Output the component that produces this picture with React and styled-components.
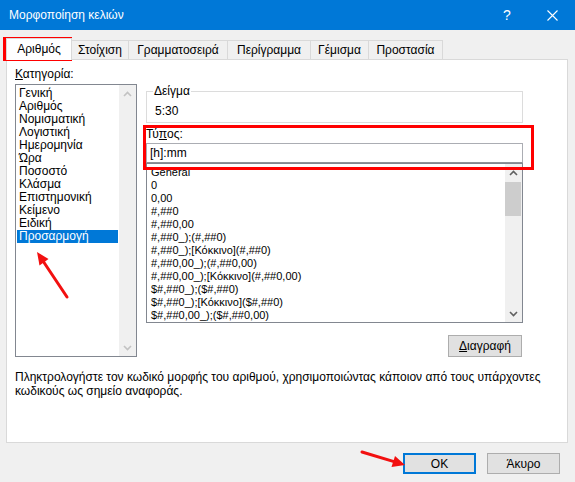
import React from 'react';
import styled, { createGlobalStyle } from 'styled-components';

const Global = createGlobalStyle`
  html, body { margin: 0; padding: 0; background: #f0f0f0; }
  body { font-family: "Liberation Sans", Arial, sans-serif; font-size: 12px; color: #000; }
  * { box-sizing: border-box; }
`;

const Window = styled.div`
  position: relative;
  width: 575px;
  height: 482px;
  background: #f0f0f0;
  display: flex;
  flex-direction: column;
  overflow: hidden;
`;

const TitleBar = styled.div`
  height: 30px;
  flex: none;
  background: #0078d7;
  color: #fff;
  display: flex;
  align-items: center;
  padding-left: 9px;
  font-size: 12px;
`;

const Title = styled.div`
  flex: 1;
`;

const TitleButton = styled.div`
  width: ${p => p.$w}px;
  height: 30px;
  display: flex;
  align-items: center;
  justify-content: center;
  font-size: 14px;
`;

const Body = styled.div`
  padding: 8px 7px 0 6px;
  display: flex;
  flex-direction: column;
`;

const TabStrip = styled.div`
  height: 21px;
  display: flex;
  align-items: flex-end;
  position: relative;
  z-index: 2;
`;

const Tab = styled.div`
  width: ${p => p.$w}px;
  height: ${p => (p.$active ? 22 : 19)}px;
  margin-left: ${p => (p.$first ? 0 : -1)}px;
  margin-bottom: ${p => (p.$active ? -1 : 0)}px;
  background: ${p => (p.$active ? '#fff' : '#f0f0f0')};
  border: 1px solid #d9d9d9;
  border-bottom: none;
  display: flex;
  align-items: center;
  justify-content: center;
  padding-bottom: ${p => (p.$active ? 1 : 0)}px;
  font-size: 12px;
  position: relative;
  z-index: ${p => (p.$active ? 2 : 1)};
`;

const Panel = styled.div`
  height: 384px;
  background: #fff;
  border: 1px solid #d9d9d9;
  padding: 7px 0 0 8px;
  display: flex;
  flex-direction: column;
`;

const TopArea = styled.div`
  display: flex;
  gap: 9px;
`;

const LeftColumn = styled.div`
  width: 122px;
  display: flex;
  flex-direction: column;
`;

const FieldLabel = styled.div`
  height: ${p => p.$h || 17}px;
  line-height: 14px;
  margin-top: ${p => p.$mt || 0}px;
  font-size: 12px;
`;

const U = styled.span`
  text-decoration: underline;
`;

const ListBox = styled.div`
  height: ${p => p.$h}px;
  border: 1px solid #828790;
  background: #fff;
  display: flex;
  overflow: hidden;
`;

const Rows = styled.div`
  flex: 1;
  min-width: 0;
  padding-top: ${p => p.$pt}px;
  overflow: hidden;
`;

const CatItem = styled.div`
  height: 13px;
  line-height: 13px;
  margin: 0 1px;
  padding-left: 2px;
  font-size: 12px;
  white-space: nowrap;
  background: ${p => (p.$selected ? '#0078d7' : 'transparent')};
  color: ${p => (p.$selected ? '#fff' : '#000')};
`;

const FmtItem = styled.div`
  height: 13px;
  line-height: 13px;
  padding-left: 4px;
  font-size: 11px;
  white-space: nowrap;
`;

const ScrollBar = styled.div`
  width: 17px;
  flex: none;
  background: #f0f0f0;
  display: flex;
  flex-direction: column;
`;

const ScrollArrow = styled.div`
  height: 17px;
  flex: none;
  display: flex;
  align-items: center;
  justify-content: center;
`;

const ScrollTrack = styled.div`
  flex: 1;
  padding: 1px 1px 0 0;
`;

const Thumb = styled.div`
  height: 34px;
  background: #cdcdcd;
`;

const RightColumn = styled.div`
  width: 377px;
  padding-top: 17px;
  display: flex;
  flex-direction: column;
`;

const GroupBox = styled.fieldset`
  margin: 0;
  padding: 0 0 0 6px;
  border: 1px solid #dcdcdc;
  min-width: 0;
  height: 39px;
`;

const Legend = styled.legend`
  padding: 0 1px;
  font-size: 12px;
  line-height: 14px;
`;

const SampleValue = styled.div`
  padding: 6px 0 0 2px;
  line-height: 14px;
  font-size: 12px;
`;

const TextInput = styled.div`
  height: 20px;
  flex: none;
  border: 1px solid #abadb3;
  border-bottom-color: #8f9398;
  padding-left: 3px;
  line-height: 18px;
  font-size: 12px;
  background: #fff;
`;

const ButtonRow = styled.div`
  display: flex;
  justify-content: flex-end;
  margin-top: 12px;
  padding-right: 1px;
`;

const Button = styled.div`
  width: ${p => p.$w}px;
  height: ${p => p.$h}px;
  background: #e1e1e1;
  border: ${p => (p.$default ? '2px solid #0078d7' : '1px solid #adadad')};
  display: flex;
  align-items: center;
  justify-content: center;
  font-size: 12px;
`;

const Description = styled.div`
  margin-top: 13px;
  line-height: 14px;
  font-size: 12px;
  white-space: nowrap;
`;

const Footer = styled.div`
  display: flex;
  justify-content: flex-end;
  gap: 11px;
  padding: 10px 8px 0 0;
`;

const Overlay = styled.svg`
  position: absolute;
  left: 0;
  top: 0;
  pointer-events: none;
`;

const Chevron = ({ up, color }) => (
  <svg width="9" height="6" viewBox="0 0 9 6">
    <polyline
      points={up ? '1,5 4.5,1.5 8,5' : '1,1 4.5,4.5 8,1'}
      fill="none"
      stroke={color}
      strokeWidth="1.6"
    />
  </svg>
);

const categories = [
  'Γενική', 'Αριθμός', 'Νομισματική', 'Λογιστική', 'Ημερομηνία', 'Ώρα',
  'Ποσοστό', 'Κλάσμα', 'Επιστημονική', 'Κείμενο', 'Ειδική', 'Προσαρμογή',
];

const formats = [
  'General', '0', '0,00', '#,##0', '#,##0,00', '#,##0_);(#,##0)',
  '#,##0_);[Κόκκινο](#,##0)', '#,##0,00_);(#,##0,00)',
  '#,##0,00_);[Κόκκινο](#,##0,00)', '$#,##0_);($#,##0)',
  '$#,##0_);[Κόκκινο]($#,##0)', '$#,##0,00_);($#,##0,00)',
];

const tabs = [
  ['Αριθμός', 66], ['Στοίχιση', 58], ['Γραμματοσειρά', 100],
  ['Περίγραμμα', 84], ['Γέμισμα', 59], ['Προστασία', 75],
];

export default function App() {
  return (
    <>
      <Global />
      <Window>
        <TitleBar>
          <Title>Μορφοποίηση κελιών</Title>
          <TitleButton $w={44}>?</TitleButton>
          <TitleButton $w={46}>
            <svg width="11" height="11" viewBox="0 0 11 11">
              <path d="M0.5 0.5 L10.5 10.5 M10.5 0.5 L0.5 10.5" stroke="#fff" strokeWidth="1.1" />
            </svg>
          </TitleButton>
        </TitleBar>
        <Body>
          <TabStrip>
            {tabs.map(([t, w], i) => (
              <Tab key={t} $w={w} $first={i === 0} $active={i === 0}>{t}</Tab>
            ))}
          </TabStrip>
          <Panel>
            <TopArea>
              <LeftColumn>
                <FieldLabel><U>Κ</U>ατηγορία:</FieldLabel>
                <ListBox $h={273}>
                  <Rows $pt={2}>
                    {categories.map((c, i) => (
                      <CatItem key={c} $selected={i === categories.length - 1}>{c}</CatItem>
                    ))}
                  </Rows>
                  <ScrollBar>
                    <ScrollArrow><Chevron up color="#c2c2c2" /></ScrollArrow>
                    <ScrollTrack />
                    <ScrollArrow><Chevron color="#c2c2c2" /></ScrollArrow>
                  </ScrollBar>
                </ListBox>
              </LeftColumn>
              <RightColumn>
                <GroupBox>
                  <Legend>Δείγμα</Legend>
                  <SampleValue>5:30</SampleValue>
                </GroupBox>
                <FieldLabel $mt={4} $h={16}>Τύ<U>π</U>ος:</FieldLabel>
                <TextInput>[h]:mm</TextInput>
                <ListBox $h={160}>
                  <Rows $pt={2}>
                    {formats.map(f => (
                      <FmtItem key={f}>{f}</FmtItem>
                    ))}
                  </Rows>
                  <ScrollBar>
                    <ScrollArrow><Chevron up color="#606060" /></ScrollArrow>
                    <ScrollTrack><Thumb /></ScrollTrack>
                    <ScrollArrow><Chevron color="#606060" /></ScrollArrow>
                  </ScrollBar>
                </ListBox>
                <ButtonRow>
                  <Button $w={74} $h={22}><U>Δ</U>ιαγραφή</Button>
                </ButtonRow>
              </RightColumn>
            </TopArea>
            <Description>
              Πληκτρολογήστε τον κωδικό μορφής του αριθμού, χρησιμοποιώντας κάποιον από τους υπάρχοντες
              <br />
              κωδικούς ως σημείο αναφοράς.
            </Description>
          </Panel>
          <Footer>
            <Button $w={73} $h={21} $default>OK</Button>
            <Button $w={73} $h={21}>Άκυρο</Button>
          </Footer>
        </Body>
        <Overlay width="575" height="482" viewBox="0 0 575 482">
          <rect x="4.5" y="38.5" width="66" height="21" fill="none" stroke="#ff0000" strokeWidth="3" />
          <rect x="144.5" y="126.5" width="388" height="42" fill="none" stroke="#ff0000" strokeWidth="3" />
          <line x1="67" y1="297" x2="43" y2="261" stroke="#f21010" strokeWidth="3" strokeLinecap="round" />
          <polygon points="37,252 48.5,259 39.5,265.5" fill="#f21010" />
          <line x1="362" y1="452" x2="394" y2="461.6" stroke="#f21010" strokeWidth="3" strokeLinecap="round" />
          <polygon points="405,465 391.5,467 395,456" fill="#f21010" />
        </Overlay>
      </Window>
    </>
  );
}
